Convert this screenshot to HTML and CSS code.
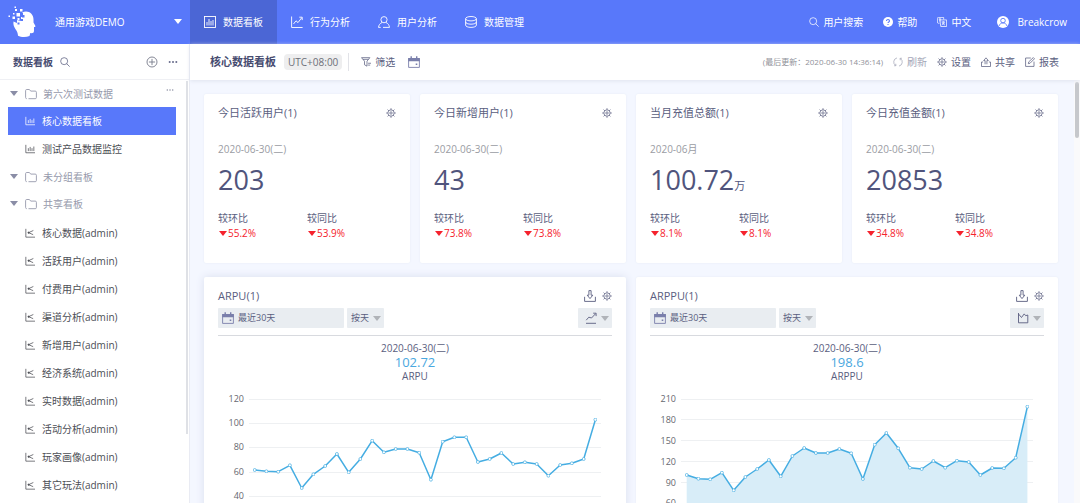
FILE: index.html
```html
<!DOCTYPE html>
<html lang="zh-CN">
<head>
<meta charset="utf-8">
<title>核心数据看板</title>
<link rel="stylesheet" href="styles.css">
</head>
<body>
<svg class="sprite" aria-hidden="true">
  <symbol id="i-search" viewBox="0 0 12 12"><circle cx="5" cy="5" r="4.200"/><path d="M8 8 11.600 11.600"/></symbol>
  <symbol id="i-board" viewBox="0 0 12 12"><rect x=".5" y=".5" width="11" height="11"/><path d="M3 9.500V6M5 9.500V3M7 9.500V5M9 9.500V4"/></symbol>
  <symbol id="i-trend" viewBox="0 0 12 12"><path d="M.6.5v11h11M2.500 8 5 4.800l2 1.800L10.700 1.800M8.300 1.200h2.900v2.900"/></symbol>
  <symbol id="i-person" viewBox="0 0 12 12"><circle cx="6" cy="3.700" r="3.100"/><path d="M4 6.500C2 7.400.8 9 .5 11.400h2.200M8 6.500c2 .9 3.200 2.500 3.500 4.900H5"/></symbol>
  <symbol id="i-db" viewBox="0 0 12 12"><ellipse cx="6" cy="2.700" rx="5.400" ry="2.200"/><path d="M.6 2.700v6.500c0 1.200 2.400 2.200 5.400 2.200s5.400-1 5.400-2.200V2.700M.6 6c0 1.200 2.400 2.200 5.400 2.200S11.400 7.200 11.400 6"/></symbol>
  <symbol id="i-help" viewBox="0 0 12 12"><circle cx="6" cy="6" r="6" fill="currentColor" stroke="none"/><path d="M4.200 4.800c0-2.400 3.600-2.300 3.600 0C7.800 6 6 6 6 7.300M6 8.300v1.200" stroke="#5878fa" stroke-width="1.300"/></symbol>
  <symbol id="i-lang" viewBox="0 0 12 12"><path d="M3 7.500H1.700A1.200 1.200 0 0 1 .5 6.300V1.700A1.200 1.200 0 0 1 1.700.5h6.300V3M3.500 3.500h8v7.900h-7zM2 2.500h3M3.500 1.500v4M5.500 6h4M7.500 5v2.500M5.600 9.500 9.500 6.800M6 7l3.500 2.700"/></symbol>
  <symbol id="i-avatar" viewBox="0 0 12 12"><circle cx="6" cy="6" r="6" fill="currentColor" stroke="none"/><g stroke="#5878fa"><circle cx="6" cy="4.600" r="2.300"/><path d="M2.300 9.800C2.700 7.900 4 6.900 6 6.900s3.300 1 3.700 2.900"/></g></symbol>
  <symbol id="i-plus" viewBox="0 0 12 12"><circle cx="6" cy="6" r="5"/><path d="M6 2.900v6.200M2.900 6h6.200"/></symbol>
  <symbol id="i-dots" viewBox="0 0 12 12"><g fill="currentColor" stroke="none"><rect x="1" y="5" width="2" height="2"/><rect x="5" y="5" width="2" height="2"/><rect x="9" y="5" width="2" height="2"/></g></symbol>
  <symbol id="i-folder" viewBox="0 0 12 12"><path d="M1.700 10.700A1.200 1.200 0 0 1 .6 9.500V2.600c0-.7.400-1.100 1.100-1.100h2.700l1.300 1.600h4.500c.8 0 1.200.4 1.200 1.200v5.200c0 .8-.4 1.200-1.200 1.200H3.500"/></symbol>
  <symbol id="i-bars" viewBox="0 0 12 12"><path d="M1 1v9.500h11M4 8.500V5M6.200 8.500V3.500M8.400 8.500V5M10.600 8.500V3"/></symbol>
  <symbol id="i-share-chart" viewBox="0 0 12 12"><path d="M1 1v10h11M10 3 4.300 5.600l5.500 2.400"/><circle cx="4.300" cy="5.600" r=".8" fill="currentColor"/></symbol>
  <symbol id="i-filter" viewBox="0 0 12 12"><path d="M.6.8h10L7.200 5v6L4.200 9.300V5zM2.300 2.800h6.600M8.500 7.500H12M8.500 9.700h2.500"/></symbol>
  <symbol id="i-cal" viewBox="0 0 12 12"><path d="M.6 2.500h10.800v8.900H.6z"/><path d="M.2 2h11.600v3.200H.2zM2.500.3h1.400v2H2.500zM8 .3h1.400v2H8zM7.700 7.500h1.600V9H7.700z" fill="currentColor" stroke="none"/></symbol>
  <symbol id="i-refresh" viewBox="0 0 12 12"><path d="M4.800 1.100A5 5 0 0 0 3.200 10.200M7.200 10.900A5 5 0 0 0 8.800 1.800M1.300 10.500l2.200-.1-.2-2.300M10.700 1.500l-2.200.1.200 2.300"/></symbol>
  <symbol id="i-gear" viewBox="0 0 12 12"><circle cx="6" cy="6" r="3.800"/><circle cx="6" cy="6" r="1.400"/><path d="M6 .2v2M6 9.800v2M.2 6h2M9.800 6h2M1.900 1.900l1.500 1.500M8.600 8.600l1.500 1.500M10.100 1.900 8.600 3.400M3.400 8.600 1.900 10.100"/></symbol>
  <symbol id="i-upload" viewBox="0 0 12 12"><path d="M2.500 6H.6v5.400h10.800V6H9.500M4.900 8.700V4.300H3.200L6 1l2.800 3.300H7.100v4.400"/></symbol>
  <symbol id="i-edit" viewBox="0 0 12 12"><path d="M7 1.200H.7v10.100h10.100V5.500M4 8l.5-2.200L10 .7l1.400 1.400L6 7.500z"/></symbol>
  <symbol id="i-download" viewBox="0 0 12 12"><path d="M.6 6.800v4.600h10.800V6.800M4.900.6h2.200v4.600h1.700L6 8.600 3.200 5.200h1.700z"/></symbol>
  <symbol id="i-line" viewBox="0 0 12 12"><path d="M1 11.300h10M1.200 8.200 3.800 5.200l2.700.8 4-4.200M8.200 1.200h2.900v2.900"/></symbol>
  <symbol id="i-area" viewBox="0 0 12 12"><path d="M1.500 1v9.800h9.300V3M1.500 2 4.500 5.500l2.700-3.600 1.500 1.800L10.800 3"/></symbol>
</svg>

<div class="app">
  <header class="topbar">
    <div class="brand">
      <svg class="logo" viewBox="0 0 30 32" aria-label="logo"><path d="M14 6.500C20 3.500 25.500 7.500 25.500 13.500v3l1.800 3.200c.4.800 0 1.200-1.300 1.300v3.700c0 2-1 2.600-3.700 2.400L21.500 30c-3.500 1.300-8.500 1.200-11.500-.3-.2-2.500-.7-4.200-2.300-6.200C6 21 5 18.500 5.500 15.500L9 17v-3l4 1v-4h2V7z"/><path d="M8.500 7h3.500v3.500H8.500zM12 3h2.500v2.500H12zM4.500 10.500h2.500v2.500H4.500zM7 3h2v2H7zM5 7h1.500v1.500H5zM.5 9.500H2v1.500H.5zM6.500 .5H8v1.500H6.500zM9.500 12h2v2h-2z"/><path class="logo-cut" d="M14 9h2.500v2.500H14zM9.500 16.500h2v2h-2zM13 13h2v2h-2z"/></svg>
      <span class="brand-name">通用游戏DEMO</span>
      <span class="caret caret-white"></span>
    </div>
    <nav class="tabs">
      <a class="tab tab-active" href="#"><svg class="icon"><use href="#i-board"/></svg>数据看板</a>
      <a class="tab" href="#"><svg class="icon"><use href="#i-trend"/></svg>行为分析</a>
      <a class="tab" href="#"><svg class="icon"><use href="#i-person"/></svg>用户分析</a>
      <a class="tab" href="#"><svg class="icon"><use href="#i-db"/></svg>数据管理</a>
    </nav>
    <div class="top-links">
      <a class="top-link" href="#"><svg class="icon icon-s"><use href="#i-search"/></svg>用户搜索</a>
      <a class="top-link" href="#"><svg class="icon icon-s"><use href="#i-help"/></svg>帮助</a>
      <a class="top-link" href="#"><svg class="icon icon-s"><use href="#i-lang"/></svg>中文</a>
      <a class="top-link user" href="#"><svg class="icon"><use href="#i-avatar"/></svg>Breakcrow</a>
    </div>
  </header>

  <aside class="sidebar">
    <div class="side-head">
      <h2 class="side-title">数据看板</h2>
      <button class="icon-btn" aria-label="搜索"><svg class="icon icon-s"><use href="#i-search"/></svg></button>
      <button class="icon-btn push" aria-label="新建"><svg class="icon"><use href="#i-plus"/></svg></button>
      <button class="icon-btn more" aria-label="更多"><svg class="icon icon-s"><use href="#i-dots"/></svg></button>
    </div>
    <div class="tree">
      <div class="group"><span class="caret"></span><svg class="icon"><use href="#i-folder"/></svg>第六次测试数据<button class="icon-btn group-more" aria-label="更多"><svg class="icon icon-xs"><use href="#i-dots"/></svg></button></div>
      <a class="item item-active" href="#"><svg class="icon icon-s"><use href="#i-bars"/></svg>核心数据看板</a>
      <a class="item" href="#"><svg class="icon icon-s"><use href="#i-bars"/></svg>测试产品数据监控</a>
      <div class="group"><span class="caret"></span><svg class="icon"><use href="#i-folder"/></svg>未分组看板</div>
      <div class="group"><span class="caret"></span><svg class="icon"><use href="#i-folder"/></svg>共享看板</div>
      <div class="shared">
        <a class="item" href="#"><svg class="icon icon-s"><use href="#i-share-chart"/></svg>核心数据(admin)</a>
        <a class="item" href="#"><svg class="icon icon-s"><use href="#i-share-chart"/></svg>活跃用户(admin)</a>
        <a class="item" href="#"><svg class="icon icon-s"><use href="#i-share-chart"/></svg>付费用户(admin)</a>
        <a class="item" href="#"><svg class="icon icon-s"><use href="#i-share-chart"/></svg>渠道分析(admin)</a>
        <a class="item" href="#"><svg class="icon icon-s"><use href="#i-share-chart"/></svg>新增用户(admin)</a>
        <a class="item" href="#"><svg class="icon icon-s"><use href="#i-share-chart"/></svg>经济系统(admin)</a>
        <a class="item" href="#"><svg class="icon icon-s"><use href="#i-share-chart"/></svg>实时数据(admin)</a>
        <a class="item" href="#"><svg class="icon icon-s"><use href="#i-share-chart"/></svg>活动分析(admin)</a>
        <a class="item" href="#"><svg class="icon icon-s"><use href="#i-share-chart"/></svg>玩家画像(admin)</a>
        <a class="item" href="#"><svg class="icon icon-s"><use href="#i-share-chart"/></svg>其它玩法(admin)</a>
      </div>
      <span class="side-thumb"></span>
    </div>
  </aside>

  <main class="main">
    <div class="toolbar">
      <h1 class="page-title">核心数据看板</h1>
      <span class="zone">UTC+08:00</span>
      <span class="rule"></span>
      <button class="tool"><svg class="icon icon-s"><use href="#i-filter"/></svg>筛选</button>
      <button class="icon-btn cal" aria-label="日期"><svg class="icon"><use href="#i-cal"/></svg></button>
      <span class="updated">(最后更新：2020-06-30 14:36:14)</span>
      <button class="tool tool-muted"><svg class="icon icon-s"><use href="#i-refresh"/></svg>刷新</button>
      <button class="tool"><svg class="icon icon-s"><use href="#i-gear"/></svg>设置</button>
      <button class="tool"><svg class="icon icon-s"><use href="#i-upload"/></svg>共享</button>
      <button class="tool"><svg class="icon icon-s"><use href="#i-edit"/></svg>报表</button>
    </div>

    <div class="board">
      <section class="card stat">
        <div class="card-head"><h3 class="card-title">今日活跃用户(1)</h3><button class="icon-btn" aria-label="设置"><svg class="icon icon-s"><use href="#i-gear"/></svg></button></div>
        <p class="date">2020-06-30(二)</p>
        <p class="value">203</p>
        <div class="compare"><div>较环比<span class="drop">55.2%</span></div><div>较同比<span class="drop">53.9%</span></div></div>
      </section>
      <section class="card stat">
        <div class="card-head"><h3 class="card-title">今日新增用户(1)</h3><button class="icon-btn" aria-label="设置"><svg class="icon icon-s"><use href="#i-gear"/></svg></button></div>
        <p class="date">2020-06-30(二)</p>
        <p class="value">43</p>
        <div class="compare"><div>较环比<span class="drop">73.8%</span></div><div>较同比<span class="drop">73.8%</span></div></div>
      </section>
      <section class="card stat">
        <div class="card-head"><h3 class="card-title">当月充值总额(1)</h3><button class="icon-btn" aria-label="设置"><svg class="icon icon-s"><use href="#i-gear"/></svg></button></div>
        <p class="date">2020-06月</p>
        <p class="value">100.72<span class="unit">万</span></p>
        <div class="compare"><div>较环比<span class="drop">8.1%</span></div><div>较同比<span class="drop">8.1%</span></div></div>
      </section>
      <section class="card stat">
        <div class="card-head"><h3 class="card-title">今日充值金额(1)</h3><button class="icon-btn" aria-label="设置"><svg class="icon icon-s"><use href="#i-gear"/></svg></button></div>
        <p class="date">2020-06-30(二)</p>
        <p class="value">20853</p>
        <div class="compare"><div>较环比<span class="drop">34.8%</span></div><div>较同比<span class="drop">34.8%</span></div></div>
      </section>

      <section class="card chart-card raised">
        <div class="card-head"><h3 class="card-title">ARPU(1)</h3><button class="icon-btn" aria-label="下载"><svg class="icon"><use href="#i-download"/></svg></button><button class="icon-btn" aria-label="设置"><svg class="icon icon-s"><use href="#i-gear"/></svg></button></div>
        <div class="controls">
          <button class="range"><svg class="icon"><use href="#i-cal"/></svg>最近30天</button>
          <label class="pick"><select class="pick-select" aria-label="粒度"><option>按天</option></select><span class="caret caret-gray"></span></label>
          <button class="kind" aria-label="图表类型"><svg class="icon"><use href="#i-line"/></svg><span class="caret caret-gray"></span></button>
        </div>
        <div class="summary"><span>2020-06-30(二)</span><strong class="sum-value">102.72</strong><span>ARPU</span></div>
        <svg class="chart" viewBox="0 0 394 180">
          <defs><marker id="dot" viewBox="0 0 4 4" refX="2" refY="2" markerWidth="4" markerHeight="4" markerUnits="userSpaceOnUse"><circle class="dot" cx="2" cy="2" r="1.500"/></marker></defs>
          <path class="grid" d="M31 14.500h352M31 38.500h352M31 62.500h352M31 87.500h352M31 111.500h352M31 135.500h352M31 160.500h352"/>
          <g class="axis"><text x="26" y="17">120</text><text x="26" y="41">100</text><text x="26" y="65">80</text><text x="26" y="90">60</text><text x="26" y="114">40</text><text x="26" y="138">20</text><text x="26" y="163">0</text></g>
          <polyline class="line" points="36.700,85 48.400,86.300 60.200,86.700 71.900,80.300 83.700,103 95.400,89.300 107.200,81 118.900,69 130.700,87.300 142.400,74 154.200,55.700 165.900,67.300 177.700,64 189.400,64 201.200,67.700 212.900,94.700 224.700,56.700 236.400,52.300 248.200,52.300 259.900,77 271.700,74 283.400,68 295.200,79 306.900,77.300 318.700,79 330.400,90.700 342.200,80 353.900,78.300 365.700,74 377.400,34.700"/>
        </svg>
      </section>

      <section class="card chart-card">
        <div class="card-head"><h3 class="card-title">ARPPU(1)</h3><button class="icon-btn" aria-label="下载"><svg class="icon"><use href="#i-download"/></svg></button><button class="icon-btn" aria-label="设置"><svg class="icon icon-s"><use href="#i-gear"/></svg></button></div>
        <div class="controls">
          <button class="range"><svg class="icon"><use href="#i-cal"/></svg>最近30天</button>
          <label class="pick"><select class="pick-select" aria-label="粒度"><option>按天</option></select><span class="caret caret-gray"></span></label>
          <button class="kind" aria-label="图表类型"><svg class="icon"><use href="#i-area"/></svg><span class="caret caret-gray"></span></button>
        </div>
        <div class="summary"><span>2020-06-30(二)</span><strong class="sum-value">198.6</strong><span>ARPPU</span></div>
        <svg class="chart" viewBox="0 0 394 180">
          <path class="grid" d="M31 14.500h352M31 34.500h352M31 55.500h352M31 76.500h352M31 97.500h352M31 118.500h352M31 139.500h352M31 160.500h352"/>
          <g class="axis"><text x="26" y="17">210</text><text x="26" y="38">180</text><text x="26" y="59">150</text><text x="26" y="80">120</text><text x="26" y="101">90</text><text x="26" y="121">60</text><text x="26" y="142">30</text><text x="26" y="163">0</text></g>
          <polygon class="area" points="36.700,160 36.700,90 48.400,93.700 60.200,94.300 71.900,87.700 83.700,105.300 95.400,92 107.200,84 118.900,75 130.700,91.300 142.400,71 154.200,63 165.900,68 177.700,68 189.400,64 201.200,68.300 212.900,94 224.700,59.700 236.400,48 248.200,63.300 259.900,82.700 271.700,84 283.400,76 295.200,82.700 306.900,75.700 318.700,77 330.400,90 342.200,83 353.900,83.300 365.700,72.700 377.400,21.700 377.400,160"/>
          <polyline class="line" points="36.700,90 48.400,93.700 60.200,94.300 71.900,87.700 83.700,105.300 95.400,92 107.200,84 118.900,75 130.700,91.300 142.400,71 154.200,63 165.900,68 177.700,68 189.400,64 201.200,68.300 212.900,94 224.700,59.700 236.400,48 248.200,63.300 259.900,82.700 271.700,84 283.400,76 295.200,82.700 306.900,75.700 318.700,77 330.400,90 342.200,83 353.900,83.300 365.700,72.700 377.400,21.700"/>
        </svg>
      </section>
      <span class="main-track"><span class="main-thumb"></span></span>
    </div>
  </main>
</div>
</body>
</html>
```
FILE: styles.css
```css
* { box-sizing: border-box; }
body {
  margin: 0;
  font-family: "Open Sans", "Noto Sans", "Noto Sans CJK SC", sans-serif;
  font-size: 10px;
  line-height: 16px;
  color: #5a5e80;
}
h1, h2, h3, p { margin: 0; }
a { color: inherit; text-decoration: none; }
button, select { font: inherit; color: inherit; border: 0; padding: 0; background: none; }
.sprite { position: absolute; width: 0; height: 0; }

.icon { width: 12px; height: 12px; flex: none; display: block; fill: none; stroke: currentColor; stroke-width: 0.9; }
.icon-s { width: 10px; height: 10px; }
.icon-xs { width: 8px; height: 8px; }
.icon-btn { display: flex; }
.caret { border: 4px solid transparent; border-top: 5px solid #8a8da6; border-bottom: 0; flex: none; }
.caret-white { border-top-color: #fff; }
.caret-gray { border-top-color: #b0b3b8; }

.app { display: grid; grid-template: auto minmax(0, 1fr) / 190px minmax(0, 1fr); height: 100vh; overflow: hidden; }

.topbar { grid-column: 1 / -1; display: flex; height: 44px; background: #5878fa; color: #fff; }
.brand { width: 190px; display: flex; align-items: center; padding: 0 8px; }
.logo { width: 30px; height: 32px; fill: #fff; }
.logo-cut { fill: #5878fa; }
.brand-name { margin-left: 17px; }
.brand .caret { margin-left: auto; margin-bottom: 2px; }
.tabs { display: flex; }
.tab { display: flex; align-items: center; gap: 7px; padding: 0 14px; }
.tab-active { background: #4b66d5; }
.top-links { margin-left: auto; display: flex; align-items: center; gap: 20px; padding-right: 13px; }
.top-link { display: flex; align-items: center; gap: 4px; }
.user { gap: 8px; margin-left: 6px; }

.sidebar { display: flex; flex-direction: column; border-right: 1px solid #e9ebf3; background: #fff; min-height: 0; }
.side-head { display: flex; align-items: center; height: 36px; padding: 0 11px 0 13px; border-bottom: 1px solid #eff0f4; flex: none; }
.side-title { font-size: 10px; color: #474c70; margin-right: 7px; }
.push { margin-left: auto; margin-right: 10px; color: #777a8a; }
.tree { position: relative; flex: 1; min-height: 0; overflow: hidden; color: #4c4e55; }
.group { display: flex; align-items: center; height: 27px; padding: 0 15px 0 10px; color: #9699ab; }
.group .icon { margin: 0 6px 0 7px; }
.group-more { margin-left: auto; align-self: flex-start; padding-top: 6px; }
.group .group-more .icon { margin: 0; }
.item { display: flex; align-items: center; gap: 7px; height: 28px; margin: 0 13px 0 8px; padding-left: 17px; }
.item-active { background: #5878fa; color: #fff; }
.shared { padding-top: 2px; }
.side-thumb { position: absolute; top: 1px; bottom: 69px; right: 1px; width: 2px; background: #dfe1e6; }

.main { display: flex; flex-direction: column; min-height: 0; background: #f4f7ff; }
.toolbar { display: flex; align-items: center; height: 36px; padding: 0 21px 0 20px; background: #fff; box-shadow: 0 1px 4px #dfe3ee; flex: none; z-index: 1; }
.page-title { font-size: 11px; color: #474c70; margin-right: 8px; }
.zone { background: #eeeeef; border-radius: 4px; padding: 0 4px; color: #6d6f78; }
.rule { width: 1px; height: 18px; background: #e2e3e8; margin: 0 12px 0 6px; }
.tool { display: flex; align-items: center; gap: 4px; margin-left: 10px; }
.rule + .tool { margin-left: 0; }
.tool-muted { color: #a4a7b8; }
.cal { margin-left: 13px; color: #7a7fab; }
.updated { margin-left: auto; font-size: 8px; color: #8f9199; }

.board { position: relative; flex: 1; min-height: 0; overflow: hidden; display: grid; grid-template-columns: repeat(4, minmax(0, 1fr)); grid-auto-rows: max-content; gap: 14px 10px; padding: 14px 22px 14px 14px; }
.card { background: #fff; border-radius: 2px; padding: 11px 14px; box-shadow: 0 0 2px #e4e8f2; }
.card-head { display: flex; align-items: center; gap: 6px; height: 16px; }
.card-title { font-size: 11px; font-weight: 400; margin-right: auto; }
.stat { padding-bottom: 22px; }
.date { margin-top: 20px; color: #9a9ca3; }
.value { font-size: 27px; line-height: 40px; height: 40px; margin-top: 3px; color: #50547c; font-weight: 400; }
.unit { font-size: 11px; line-height: 1; }
.compare { display: grid; grid-template-columns: 1fr 1fr; margin-top: 11px; line-height: 15px; }
.drop { display: flex; align-items: center; gap: 1px; padding-left: 1px; color: #f5222d; }
.drop::before { content: ""; border: 4px solid transparent; border-top: 5px solid #f5222d; border-bottom: 0; }

.chart-card { grid-column: span 2; }
.raised { box-shadow: 0 0 8px #d9deee; }
.controls { display: flex; gap: 3px; padding: 4px 0 7px; border-bottom: 1px solid #d8dadf; font-size: 9px; }
.range { display: flex; align-items: center; gap: 4px; width: 32%; height: 20px; padding-left: 4px; background: #e9edf1; border-radius: 1px; }
.range .icon { color: #7a7fab; }
.pick, .kind { display: flex; align-items: center; gap: 4px; height: 20px; padding: 0 3px 0 4px; background: #e9edf1; border-radius: 1px; }
.pick-select { appearance: none; outline: 0; height: 20px; width: 18px; }
.kind { margin-left: auto; padding-left: 7px; }
.summary { display: flex; flex-direction: column; align-items: center; padding-top: 5px; line-height: 14px; }
.sum-value { font-size: 13px; font-weight: 400; color: #4aa8e0; }
.chart { display: block; width: 100%; height: auto; margin-top: 2px; }
.grid { stroke: #eef0f2; fill: none; }
.axis { font-size: 9px; fill: #66686f; text-anchor: end; }
.line { fill: none; stroke: #45ade2; stroke-width: 1.5; stroke-linejoin: round; marker: url(#dot); }
.dot { fill: #fff; stroke: #45ade2; stroke-width: 0.7; }
.area { fill: #d8edf8; }
.main-track { position: absolute; top: 0; right: 0; bottom: 0; width: 6px; background: #fafafb; }
.main-thumb { position: absolute; top: 2px; right: 1px; width: 4px; height: 56px; background: #c6c8cc; border-radius: 2px; }
```
